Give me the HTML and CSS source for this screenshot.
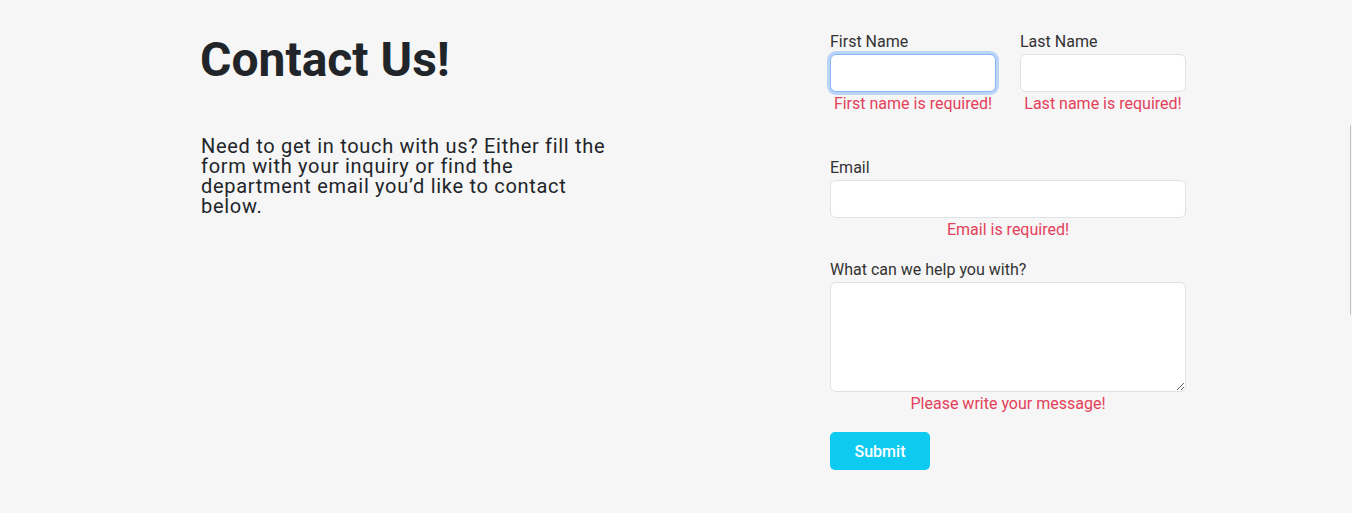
FILE: index.html
```html
<!DOCTYPE html>
<html lang="en">
<head>
<meta charset="utf-8">
<title>Contact Us</title>
<link rel="stylesheet" href="styles.css">
</head>
<body>
<main class="page">
  <section class="intro">
    <h1 class="title">Contact Us!</h1>
    <p class="lead">Need to get in touch with us? Either fill the form with your inquiry or find the department email you’d like to contact below.</p>
  </section>
  <form class="form">
    <div class="row first-row">
      <div class="group">
        <label class="label" for="fn">First Name</label>
        <input class="input focused" id="fn" type="text">
        <div class="error">First name is required!</div>
      </div>
      <div class="group">
        <label class="label" for="ln">Last Name</label>
        <input class="input" id="ln" type="text">
        <div class="error">Last name is required!</div>
      </div>
    </div>
    <div class="group">
      <label class="label" for="em">Email</label>
      <input class="input" id="em" type="email">
      <div class="error">Email is required!</div>
    </div>
    <div class="group">
      <label class="label" for="msg">What can we help you with?</label>
      <textarea class="input textarea" id="msg"></textarea>
      <div class="error">Please write your message!</div>
    </div>
    <button class="submit" type="button">Submit</button>
  </form>
</main>
<div class="edge-line"></div>
</body>
</html>
```
FILE: styles.css
```css
* { box-sizing: border-box; }
html, body { margin: 0; padding: 0; }
body {
  background: #f6f6f6;
  font-family: Roboto, "Liberation Sans", sans-serif;
  color: #212529;
  height: 513px;
  overflow: hidden;
}
.page {
  display: flex;
  justify-content: space-between;
  width: 986px;
  margin-left: 200px;
  padding-top: 30px;
}
.intro { width: 415px; }
.title {
  margin: 0;
  font-size: 48px;
  font-weight: 700;
  line-height: 60px;
  color: #212529;
}
.lead {
  margin: 46px 0 0 1px;
  font-size: 20px;
  line-height: 20px;
  letter-spacing: 0.7px;
  color: #212529;
}
.form { width: 356px; }
.row {
  display: grid;
  grid-template-columns: 1fr 1fr;
  column-gap: 24px;
}
.first-row { margin-bottom: 40px; }
.group { margin-bottom: 16px; }
.row .group { margin-bottom: 0; }
.label {
  display: block;
  font-size: 16px;
  line-height: 24px;
  color: #333;
}
.input {
  display: block;
  width: 100%;
  height: 38px;
  border: 1px solid #dee2e6;
  border-radius: 6px;
  background: #fff;
  font: inherit;
  outline: none;
}
.focused {
  border-color: #86b7fe;
  box-shadow: 0 0 0 3px rgba(13, 110, 253, 0.25);
}
.textarea {
  height: 110px;
  resize: vertical;
}
.error {
  text-align: center;
  font-size: 16px;
  line-height: 24px;
  color: #e4405a;
}
.submit {
  width: 100px;
  height: 38px;
  border: none;
  border-radius: 5px;
  background: #0dcaf0;
  color: #fff;
  font-family: Roboto, "Liberation Sans", sans-serif;
  font-size: 16px;
  font-weight: 500;
}
.edge-line {
  position: fixed;
  right: 1px;
  top: 125px;
  width: 1px;
  height: 190px;
  background: #c4c4c4;
}
```
